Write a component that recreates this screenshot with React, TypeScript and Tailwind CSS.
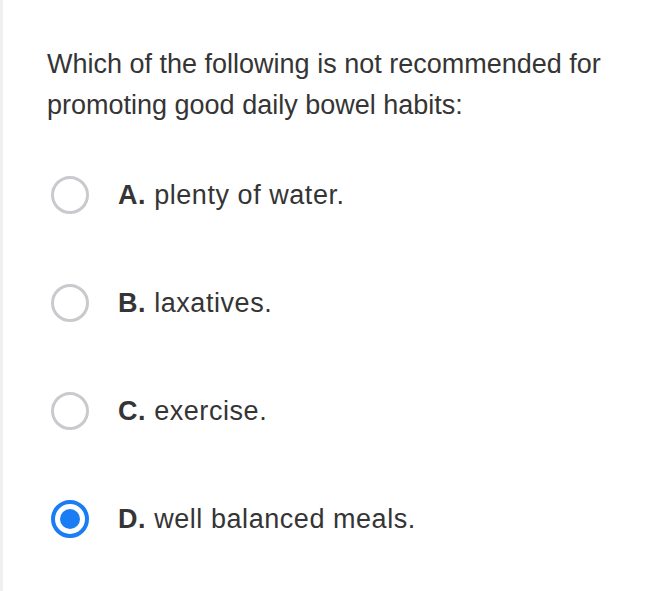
import { useState } from "react";

const options = [
  { key: "A", text: "plenty of water." },
  { key: "B", text: "laxatives." },
  { key: "C", text: "exercise." },
  { key: "D", text: "well balanced meals." },
];

export default function App() {
  const [picked, setPicked] = useState("D");

  return (
    <div className="flex h-[591px] w-[654px] bg-white font-['Liberation_Sans',Arial,sans-serif] text-[#353535]">
      {/* left edge strip */}
      <div className="w-[3px] bg-[#f0f0f0]" />
      <div className="flex-1 pl-[44px] pt-[44px]">
        <p className="text-[27px] leading-[41px]">
          Which of the following is not recommended for promoting good daily bowel habits:
        </p>
        <ul className="mt-[50px] flex flex-col gap-[70px]">
          {options.map((o) => {
            const on = picked === o.key;
            return (
              <li
                key={o.key}
                onClick={() => setPicked(o.key)}
                className="flex h-[38px] cursor-pointer items-center gap-[29px]"
              >
                <span
                  className={`ml-[4px] flex h-[38px] w-[38px] items-center justify-center rounded-full ${
                    on ? "border-[4px] border-[#1a7df3]" : "border-[3px] border-[#c9cacd]"
                  }`}
                >
                  {on && <span className="h-[20px] w-[20px] rounded-full bg-[#1a7df3]" />}
                </span>
                <span className="text-[27px] tracking-[0.55px]">
                  <b className="font-bold">{o.key}.</b> {o.text}
                </span>
              </li>
            );
          })}
        </ul>
      </div>
    </div>
  );
}
